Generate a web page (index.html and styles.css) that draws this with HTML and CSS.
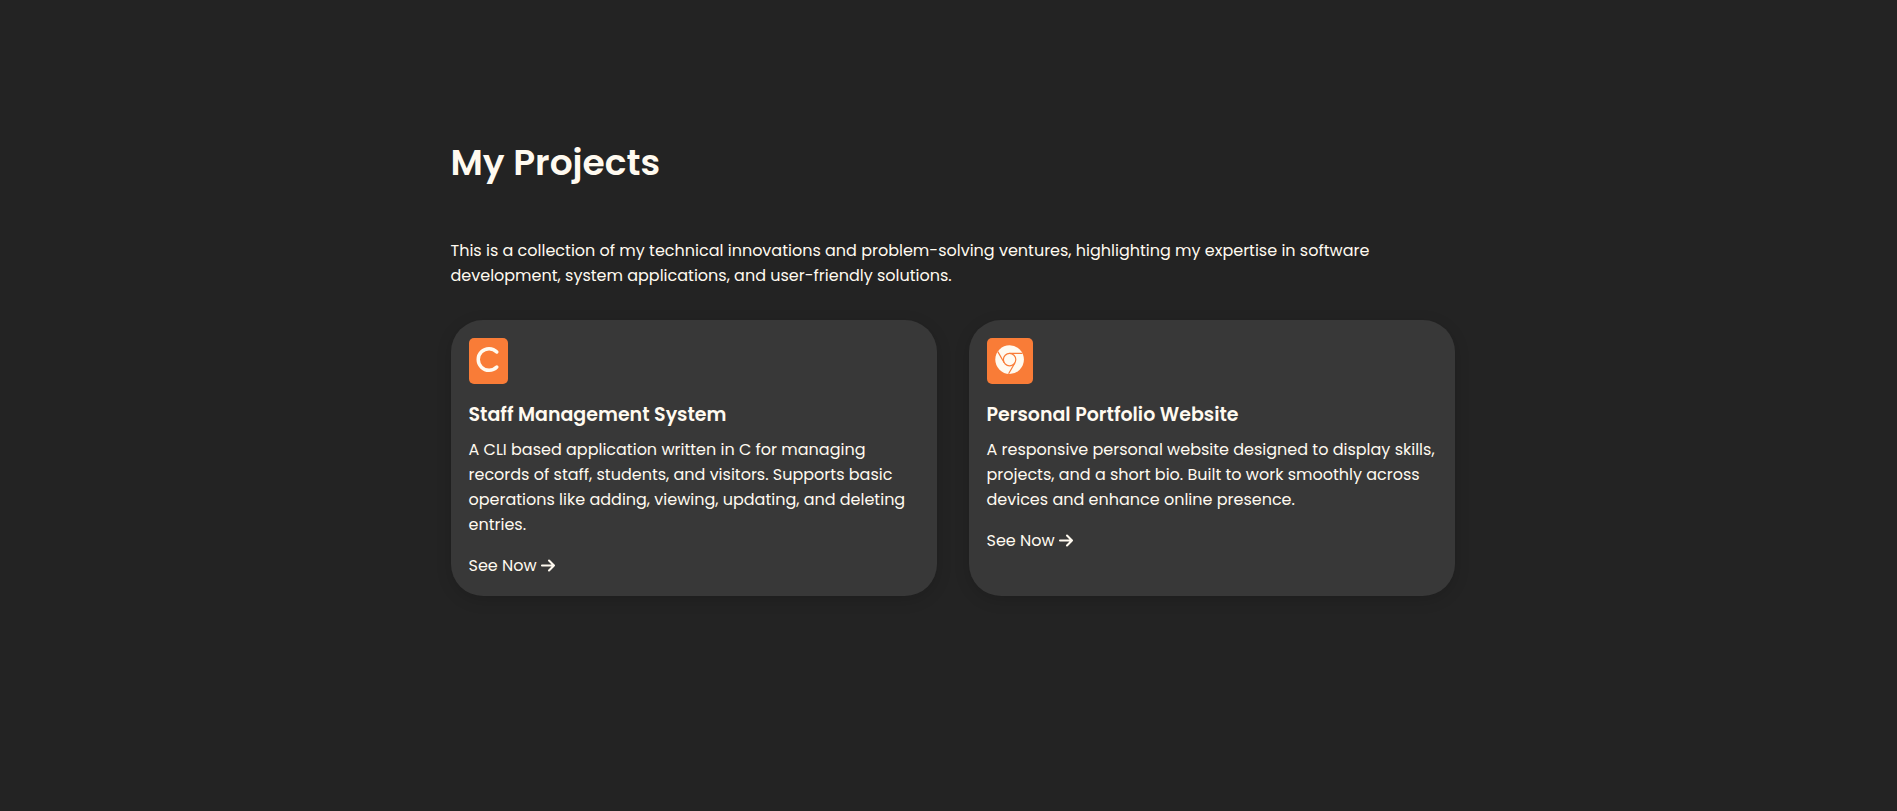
FILE: index.html
```html
<!DOCTYPE html>
<html lang="en">
<head>
<meta charset="utf-8">
<meta name="viewport" content="width=device-width, initial-scale=1">
<title>My Projects</title>
<link rel="stylesheet" href="styles.css">
</head>
<body>
<main class="projects">
  <h1 class="projects-title">My Projects</h1>
  <p class="projects-intro">This is a collection of my technical innovations and problem-solving ventures, highlighting my expertise in software development, system applications, and user-friendly solutions.</p>
  <div class="project-grid">
    <article class="project-card">
      <div class="project-icon">
        <svg width="21" height="28" viewBox="0 0 21 28" aria-hidden="true"><path d="M18.8 6A10.8 10.8 0 1 0 18.8 21" fill="none" stroke="currentColor" stroke-width="3.5" stroke-linecap="round"/></svg>
      </div>
      <h2 class="project-name">Staff Management System</h2>
      <p class="project-text">A CLI based application written in C for managing records of staff, students, and visitors. Supports basic operations like adding, viewing, updating, and deleting entries.</p>
      <a class="project-link" href="#staff">See Now <svg width="16" height="16" viewBox="0 0 16 16" aria-hidden="true"><path d="M2 7.5h12M9 2.5l5 5-5 5" fill="none" stroke="currentColor" stroke-width="2.1" stroke-linecap="round" stroke-linejoin="round"/></svg></a>
    </article>
    <article class="project-card">
      <div class="project-icon">
        <svg width="28" height="28" viewBox="0 0 28 28" aria-hidden="true"><circle cx="13.6" cy="13.6" r="14.3" fill="currentColor"/><g fill="none" stroke="#f97c37" stroke-width="1.2"><circle cx="13.6" cy="13.6" r="6.2"/><path d="M13.6 7.4h12.9M8.2 16.7L1.8 5.6M19 16.7L12.6 27.8"/></g></svg>
      </div>
      <h2 class="project-name">Personal Portfolio Website</h2>
      <p class="project-text">A responsive personal website designed to display skills, projects, and a short bio. Built to work smoothly across devices and enhance online presence.</p>
      <a class="project-link" href="#portfolio">See Now <svg width="16" height="16" viewBox="0 0 16 16" aria-hidden="true"><path d="M2 7.5h12M9 2.5l5 5-5 5" fill="none" stroke="currentColor" stroke-width="2.1" stroke-linecap="round" stroke-linejoin="round"/></svg></a>
    </article>
  </div>
</main>
</body>
</html>
```
FILE: styles.css
```css
* {
  box-sizing: border-box;
  margin: 0;
  padding: 0;
}

body {
  background: #232323;
  color: #fffaf0;
  font: 400 16px/25px Poppins, Inter, sans-serif;
  padding: 0 16px 0 24px;
}

.projects {
  max-width: 1004px;
  margin: 0 auto;
  padding: 136px 0;
}

.projects-title {
  font-size: 36px;
  font-weight: 600;
  line-height: 54px;
  margin-bottom: 48px;
}

.projects-intro {
  margin-bottom: 32px;
}

.project-grid {
  display: grid;
  grid-template-columns: repeat(auto-fit, minmax(min(100%, 320px), 1fr));
  gap: 32px;
}

.project-card {
  display: flex;
  flex-direction: column;
  align-items: flex-start;
  padding: 18px;
  border-radius: 32px;
  background: #383838;
  box-shadow: 0 4px 16px rgba(0, 0, 0, 0.14);
}

.project-icon {
  display: flex;
  padding: 8px 9px 10px;
  margin-bottom: 16px;
  border-radius: 5px;
  background: #f97c37;
}

.project-icon svg {
  overflow: visible;
}

.project-name {
  font-size: 19px;
  font-weight: 600;
  line-height: 30px;
  margin-bottom: 7px;
}

.project-text {
  margin-bottom: 16px;
}

.project-link {
  display: inline-flex;
  align-items: center;
  gap: 3px;
  color: inherit;
  text-decoration: none;
}
```
